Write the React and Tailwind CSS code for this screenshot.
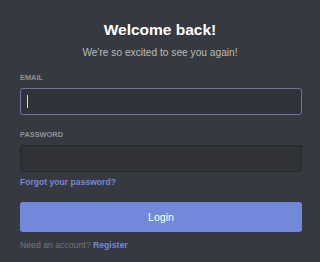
import React from 'react';

export default function App() {
  return (
    <div
      className="w-[320px] h-[262px] bg-[#36393f] overflow-hidden px-5 pt-[21px] flex flex-col"
      style={{ fontFamily: '"Liberation Sans", Arial, sans-serif' }}
    >
      {/* Heading */}
      <h1 className="text-center text-white font-bold text-[15.5px] leading-[18px]">Welcome back!</h1>
      <p className="mt-[7px] text-center text-[#b9bbbe] text-[10.2px] leading-[14px]">
        We're so excited to see you again!
      </p>

      {/* Email */}
      <label className="mt-[13px] text-[#8e9297] font-bold text-[7.4px] leading-[10px] uppercase">Email</label>
      <div className="mt-[5px] h-[27px] w-[282px] rounded-[3px] border border-[#6d74a3] bg-[#303339] flex items-center pl-[6px]">
        <div className="w-px h-[13px] bg-[#dcddde]" />
      </div>

      {/* Password */}
      <label className="mt-[15px] text-[#8e9297] font-bold text-[7.4px] leading-[10px] uppercase">Password</label>
      <div className="mt-[5px] h-[27px] w-[282px] rounded-[3px] border border-[#26282c] bg-[#303236]" />

      <a className="mt-[4px] text-[#7289da] font-bold text-[8.6px] leading-[12px] w-fit">Forgot your password?</a>

      <button className="mt-[14px] h-[30px] w-[282px] rounded-[3px] bg-[#7289da] text-white text-[10.6px] leading-none">
        Login
      </button>

      <p className="mt-[7px] text-[#72767d] text-[8.7px] leading-[12px]">
        Need an account? <span className="text-[#7289da] font-bold">Register</span>
      </p>
    </div>
  );
}
